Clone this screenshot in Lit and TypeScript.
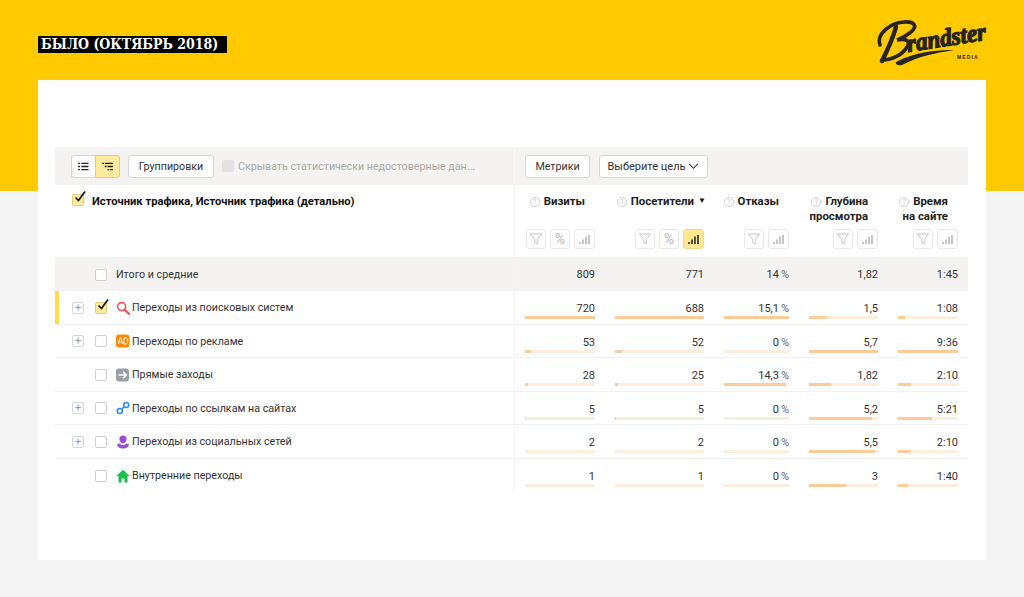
import { LitElement, html, css, svg } from "lit";
import { customElement } from "lit/decorators.js";

interface Row {
  icon: string;
  label: string;
  plus: boolean;
  checked?: boolean;
  marked?: boolean;
  cells: [string, number][];
}

const ROWS: Row[] = [
  { icon: "search", label: "Переходы из поисковых систем", plus: true, checked: true, marked: true,
    cells: [["720", 100], ["688", 100], ["15,1 %", 100], ["1,5", 26], ["1:08", 12]] },
  { icon: "ad", label: "Переходы по рекламе", plus: true,
    cells: [["53", 8], ["52", 8], ["0 %", 0], ["5,7", 100], ["9:36", 100]] },
  { icon: "direct", label: "Прямые заходы", plus: false,
    cells: [["28", 4], ["25", 3], ["14,3 %", 95], ["1,82", 32], ["2:10", 22]] },
  { icon: "link", label: "Переходы по ссылкам на сайтах", plus: true,
    cells: [["5", 1], ["5", 1], ["0 %", 0], ["5,2", 91], ["5:21", 56]] },
  { icon: "social", label: "Переходы из социальных сетей", plus: true,
    cells: [["2", 0], ["2", 0], ["0 %", 0], ["5,5", 96], ["2:10", 22]] },
  { icon: "home", label: "Внутренние переходы", plus: false,
    cells: [["1", 0], ["1", 0], ["0 %", 0], ["3", 53], ["1:40", 17]] },
];

const HEADS: { lines: string[]; sort?: boolean; pct?: boolean; active?: boolean }[] = [
  { lines: ["Визиты"], pct: true },
  { lines: ["Посетители"], sort: true, pct: true, active: true },
  { lines: ["Отказы"] },
  { lines: ["Глубина", "просмотра"] },
  { lines: ["Время", "на сайте"] },
];

const TOTALS = ["809", "771", "14 %", "1,82", "1:45"];

const ICONS: Record<string, unknown> = {
  search: svg`<svg viewBox="0 0 14 14" width="14" height="14"><circle cx="5.6" cy="5.6" r="4" fill="none" stroke="#f2555a" stroke-width="1.6"/><path d="M8.6 8.6L13 13" stroke="#f2555a" stroke-width="2.2" stroke-linecap="round"/></svg>`,
  ad: svg`<svg viewBox="0 0 14 14" width="14" height="14"><rect width="13.5" height="13" y=".5" rx="3" fill="#ff8a00"/><path d="M2 10L4 4h.8l2 6M2.800 8h3.200" fill="none" stroke="#fff" stroke-width="1"/><path d="M8 4v6h1.300c1.500 0 2.500-1.100 2.500-3s-1-3-2.500-3z" fill="none" stroke="#fff" stroke-width="1"/></svg>`,
  direct: svg`<svg viewBox="0 0 14 14" width="14" height="14"><rect width="13" height="13" y=".5" rx="3" fill="#9a9fa6"/><path d="M2.500 7h7M7 3.800L10.200 7 7 10.200" fill="none" stroke="#fff" stroke-width="1.600"/></svg>`,
  link: svg`<svg viewBox="0 0 14 14" width="14" height="14"><circle cx="3.800" cy="10" r="2.500" fill="none" stroke="#2f8fec" stroke-width="1.600"/><circle cx="10.200" cy="4" r="2.500" fill="none" stroke="#2f8fec" stroke-width="1.600"/><path d="M5.600 8.200L8.400 5.800" stroke="#2f8fec" stroke-width="1.600"/></svg>`,
  social: svg`<svg viewBox="0 0 14 14" width="14" height="14"><path d="M7 .5a3.600 3.600 0 0 1 3.600 3.600c0 2-1.400 4.400-3.600 4.400S3.400 6.100 3.400 4.100A3.600 3.600 0 0 1 7 .5z" fill="#9b4fd8"/><path d="M1 9.500c1.500-.6 2.600-.9 3-1 .6 1 1.600 1.500 3 1.500s2.400-.5 3-1.500c.4.100 1.500.4 3 1-.3 2.500-3 4-6 4s-5.700-1.500-6-4z" fill="#9b4fd8"/></svg>`,
  home: svg`<svg viewBox="0 0 14 14" width="14" height="14"><path d="M7 .8L.4 7h2.100v6.500h3V9.500h3v4h3V7h2.100z" fill="#18c04c"/></svg>`,
};

const FILTER = svg`<svg viewBox="0 0 14 14" width="14" height="14"><path d="M1.500 2h11L8.200 7.500V12L5.800 10.500V7.500z" fill="none" stroke="#bdbdbd" stroke-width=".9"/></svg>`;
const BARS = svg`<svg viewBox="0 0 12 10" width="12" height="10"><path d="M1 8v2M4 5.500V10M7 2.500V10M10 1v9" fill="none" stroke="currentColor" stroke-width="1.500"/></svg>`;
const CHECK = svg`<svg class="tick" viewBox="0 0 14 14" width="14" height="14"><path d="M2.500 7.500L5.500 10.500 12 1.500" fill="none" stroke="#111" stroke-width="1.700"/></svg>`;

@customElement("app-root")
export class AppRoot extends LitElement {
  static styles = css`
    :host {
      display: block;
      width: 1024px;
      height: 597px;
      overflow: hidden;
      background: linear-gradient(#ffcb00 0 191px, #f4f4f4 191px);
      font-family: "Roboto", "Liberation Sans", sans-serif;
      font-size: 10.7px;
      color: #333;
    }
    .head {
      height: 80px;
      box-sizing: border-box;
      padding: 36px 37px 0 38px;
      display: flex;
      justify-content: space-between;
      align-items: flex-start;
    }
    .stamp {
      width: 189px;
      height: 17px;
      box-sizing: border-box;
      padding-left: 3px;
      background: #000;
      color: #fff;
      font: 700 14px/17px "DejaVu Serif Condensed", "DejaVu Serif", serif;
      white-space: nowrap;
    }
    .logo { margin: -17px -10px 0 0; display: block; overflow: visible; }
    .card {
      margin: 0 38px;
      height: 480px;
      box-sizing: border-box;
      padding: 67px 18px 0 17px;
      background: #fff;
    }
    .grid {
      display: grid;
      grid-template-columns: 460px 90px 109px 85px 89px 80px;
    }
    .toolbar {
      height: 38px;
      background: #f4f3f1;
      display: grid;
      grid-template-columns: 460px 1fr;
    }
    .tool-left, .tool-right {
      display: flex;
      align-items: center;
    }
    .tool-left { padding-left: 16px; border-right: 1px solid #fafafa; box-sizing: border-box; }
    .tool-right { padding-left: 10px; gap: 9px; }
    .btn {
      height: 23px;
      box-sizing: border-box;
      border: 1px solid #d6d6d6;
      border-radius: 3px;
      background: #fff;
      display: flex;
      align-items: center;
      justify-content: center;
      color: #333;
      white-space: nowrap;
    }
    .seg { width: 24px; }
    .seg.l { border-radius: 3px 0 0 3px; border-right: 0; }
    .seg.r { width: 25px; border-radius: 0 3px 3px 0; background: #ffeba0; border-color: #e3cd7b; }
    .group { width: 86px; margin-left: 8px; }
    .metrics { width: 65px; }
    .goal { width: 109px; gap: 3px; font-size: 11px; }
    .dis-box {
      width: 12px; height: 12px; margin-left: 8px;
      background: #e2e1df; border-radius: 2px;
    }
    .dis-text { margin-left: 4px; color: #a8a8a8; white-space: nowrap; }
    .h-title {
      height: 72px;
      box-sizing: border-box;
      padding: 9px 0 0 17px;
      display: flex;
      gap: 8px;
      border-right: 1px solid #f4f4f4;
    }
    .h-title b { font-size: 11.2px; line-height: 14px; padding-top: 1px; color: #111; font-weight: 700; white-space: nowrap; }
    .box {
      width: 12px; height: 12px;
      box-sizing: border-box;
      border: 1px solid #cfcfcf;
      border-radius: 2px;
      background: #fff;
      position: relative;
      flex: none;
    }
    .box.on { background: #ffeba0; border-color: #e3cd7b; }
    .tick { position: absolute; left: 0; top: -5px; }
    .h-col {
      height: 72px;
      box-sizing: border-box;
      padding: 9px 10px 0 10px;
      display: flex;
      flex-direction: column;
    }
    .h-text {
      height: 35px;
      padding-right: 10px;
      display: flex;
      flex-direction: column;
      align-items: flex-end;
      font-weight: 700;
      font-size: 11.4px;
      line-height: 15px;
      color: #222;
      position: relative;
    }
    .h-line { display: flex; align-items: center; gap: 4px; white-space: nowrap; }
    .help {
      width: 10px; height: 10px;
      box-sizing: border-box;
      border: 1px solid #d2d2d2;
      border-radius: 50%;
      color: #c6c6c6;
      font-size: 7px;
      line-height: 8px;
      text-align: center;
      font-weight: 400;
    }
    .sort { position: absolute; right: -2px; top: 3px; font-size: 8px; line-height: 8px; color: #111; }
    .tools {
      display: flex;
      justify-content: flex-end;
      gap: 4px;
    }
    .tool {
      width: 20px; height: 20px;
      box-sizing: border-box;
      border: 1px solid #e9e9e9;
      border-radius: 3px;
      display: flex;
      align-items: center;
      justify-content: center;
      color: #b5b5b5;
      font-size: 14px;
    }
    .tool.wide { width: 21px; }
    .tool.on { background: #ffe88f; border-color: #eedb92; color: #222; }
    .row { height: 33.5px; border-bottom: 1px solid #f1f1f1; box-sizing: border-box; }
    .row.total { height: 34px; background: #f4f3f1; border-bottom: 0; }
    .name {
      position: relative;
      display: flex;
      align-items: center;
      padding: 1px 0 0 17px;
      height: 100%;
      box-sizing: border-box;
      border-right: 1px solid #f4f4f4;
      white-space: nowrap;
    }
    .mark { position: absolute; left: 0; top: 0; bottom: 0; width: 4px; background: #ffdb4d; }
    .plus {
      width: 12px; height: 12px;
      box-sizing: border-box;
      border: 1px solid #d6d6d6;
      border-radius: 2px;
      color: #999;
      font-size: 11px;
      line-height: 9px;
      text-align: center;
      flex: none;
    }
    .plus-gap { width: 12px; flex: none; }
    .name .box { margin-left: 11px; }
    .ico { width: 14px; height: 14px; margin: 0 2px 0 9px; flex: none; }
    .total-label { margin-left: 9px; }
    .cell {
      padding: 0 10px;
      box-sizing: border-box;
      height: 100%;
      display: flex;
      flex-direction: column;
    }
    .val {
      text-align: right;
      padding-top: 11px;
      line-height: 14px;
      font-size: 11px;
      color: #333;
      white-space: nowrap;
      height: 25px;
      box-sizing: border-box;
    }
    .pct { color: #666; margin-left: 2px; }
    .track { height: 3px; background: #ffeedd; }
    .fill { height: 3px; background: #ffcb99; }
    .row-last { border-bottom: 0; }
  `;

  private logo() {
    return html`<svg class="logo" width="124" height="48" viewBox="0 0 124 48">
      <path d="M7 26C3 16 16 4 31 3C41 2 45 7 38 13C33 17 27 20 24 21C33 19 38 22 34 28C30 35 20 41 9 41" fill="none" stroke="#272422" stroke-width="3.600" stroke-linecap="round"/>
      <path d="M23 8C20 19 15 30 9 42" fill="none" stroke="#272422" stroke-width="4.500" stroke-linecap="round"/>
      <text x="35" y="33" transform="rotate(-9 35 33)" textLength="80" lengthAdjust="spacingAndGlyphs" font-family="Liberation Serif" font-weight="700" font-style="italic" font-size="25" fill="#272422" stroke="#272422" stroke-width="1.300">randster</text>
      <path d="M23 43C42 33 62 31 81 31C63 34 46 37 29 46C25 47 22 45 23 43z" fill="#272422"/>
      <text x="84" y="39.500" font-family="Liberation Sans" font-weight="700" font-size="5" letter-spacing="1.100" fill="#272422">MEDIA</text>
    </svg>`;
  }

  private value(v: string) {
    return v.endsWith(" %") ? html`${v.slice(0, -2)}<span class="pct">%</span>` : v;
  }

  render() {
    return html`
      <div class="head">
        <div class="stamp">БЫЛО (ОКТЯБРЬ 2018)</div>
        ${this.logo()}
      </div>
      <div class="card">
        <div class="toolbar">
          <div class="tool-left">
            <div class="btn seg l">
              <svg viewBox="0 0 12 10" width="11" height="9"><path d="M0 1.500h2M3.500 1.500h8M0 5h2M3.500 5h8M0 8.500h2M3.500 8.500h8" stroke="#222" stroke-width="1.600"/></svg>
            </div>
            <div class="btn seg r">
              <svg viewBox="0 0 12 10" width="11" height="9"><path d="M0 1.500h2M3 1.500h9M3 5h2M6 5h6M6 8.500h2M9 8.500h3" stroke="#222" stroke-width="1.500"/></svg>
            </div>
            <div class="btn group">Группировки</div>
            <div class="dis-box"></div>
            <div class="dis-text">Скрывать статистически недостоверные дан...</div>
          </div>
          <div class="tool-right">
            <div class="btn metrics">Метрики</div>
            <div class="btn goal">Выберите цель<svg viewBox="0 0 12 8" width="11" height="7"><path d="M1 1l5 5 5-5" fill="none" stroke="#333" stroke-width="1.200"/></svg></div>
          </div>
        </div>

        <div class="grid">
          <div class="h-title"><div class="box on">${CHECK}</div><b>Источник трафика, Источник трафика (детально)</b></div>
          ${HEADS.map(
            (h) => html`<div class="h-col">
              <div class="h-text">
                ${h.lines.map(
                  (l, i) => html`<div class="h-line">${i === 0 ? html`<span class="help">?</span>` : ""}${l}</div>`
                )}
                ${h.sort ? html`<span class="sort">▼</span>` : ""}
              </div>
              <div class="tools">
                <div class="tool">${FILTER}</div>
                ${h.pct ? html`<div class="tool">%</div>` : ""}
                <div class="tool wide ${h.active ? "on" : ""}">${BARS}</div>
              </div>
            </div>`
          )}
        </div>

        <div class="grid row total">
          <div class="name">
            <span class="plus-gap"></span>
            <span class="box"></span>
            <span class="total-label">Итого и средние</span>
          </div>
          ${TOTALS.map((v) => html`<div class="cell"><div class="val">${this.value(v)}</div></div>`)}
        </div>

        ${ROWS.map(
          (r, i) => html`<div class="grid row ${i === ROWS.length - 1 ? "row-last" : ""}">
            <div class="name">
              ${r.marked ? html`<span class="mark"></span>` : ""}
              ${r.plus ? html`<span class="plus">+</span>` : html`<span class="plus-gap"></span>`}
              <span class="box ${r.checked ? "on" : ""}">${r.checked ? CHECK : ""}</span>
              <span class="ico">${ICONS[r.icon]}</span>
              <span>${r.label}</span>
            </div>
            ${r.cells.map(
              ([v, w]) => html`<div class="cell">
                <div class="val">${this.value(v)}</div>
                <div class="track"><div class="fill" style="width:${w}%"></div></div>
              </div>`
            )}
          </div>`
        )}
      </div>
    `;
  }
}
